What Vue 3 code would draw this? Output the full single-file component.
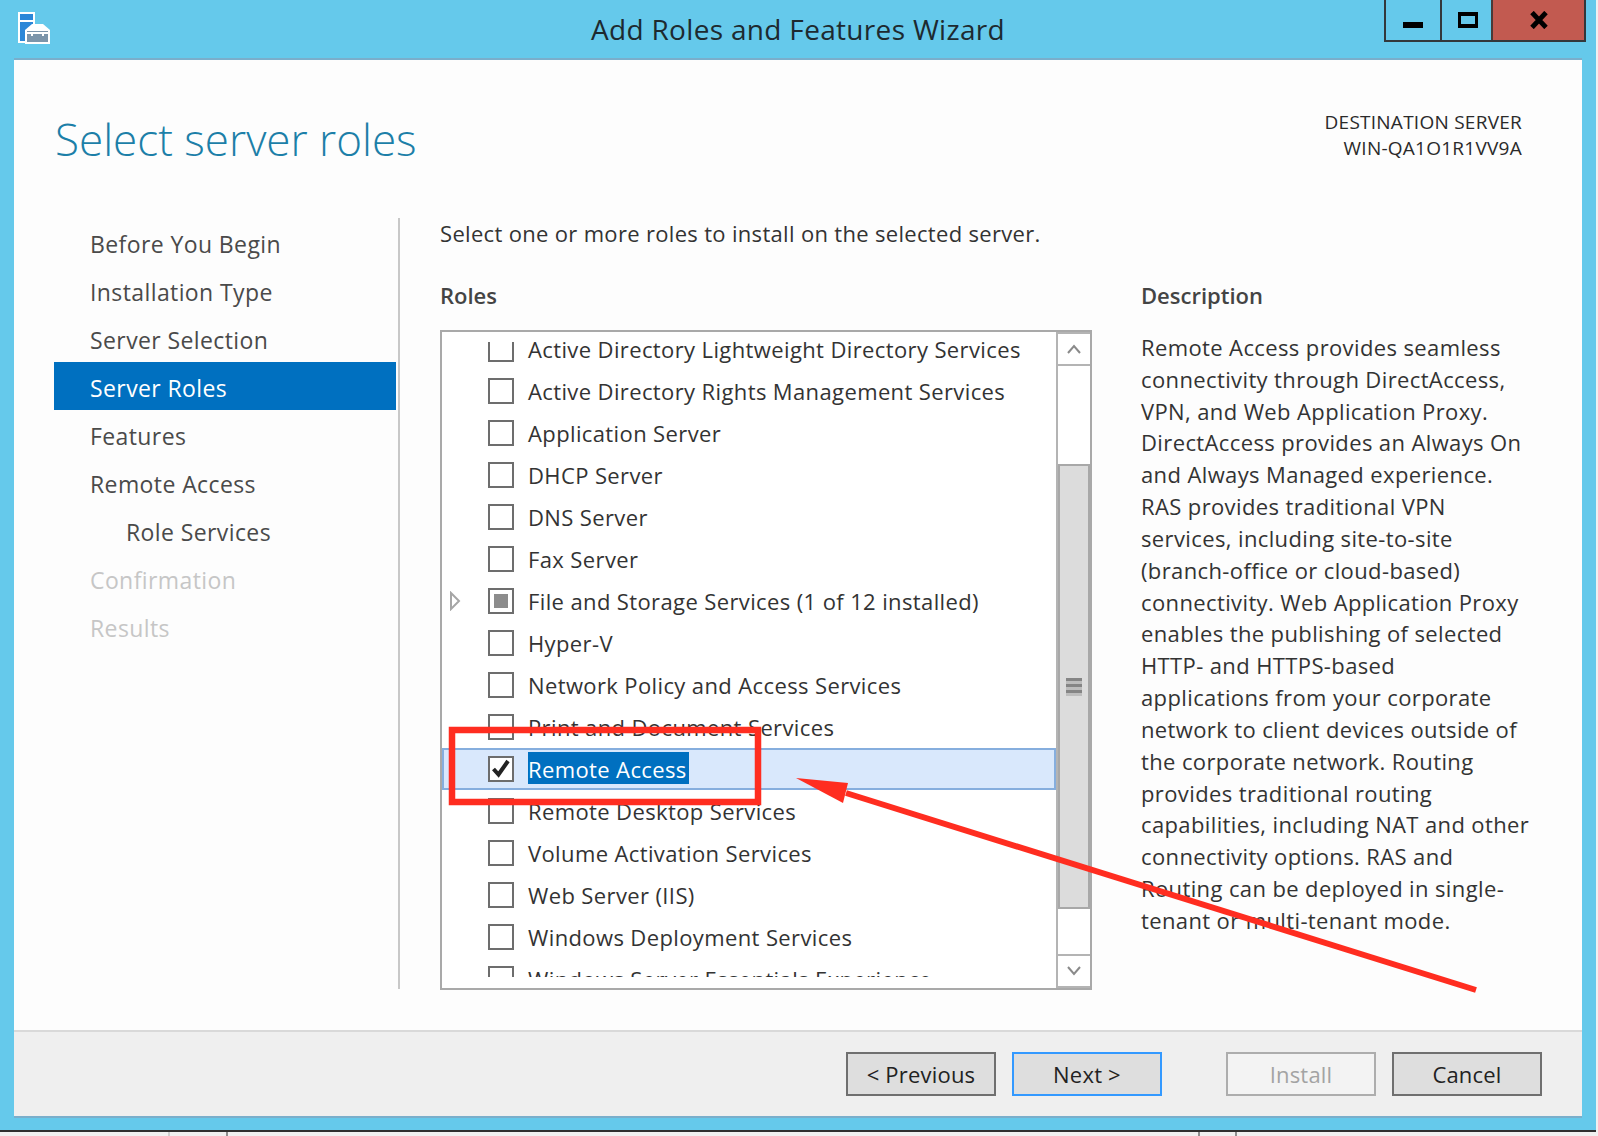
<script setup>
const steps = [
  { label: 'Before You Begin' },
  { label: 'Installation Type' },
  { label: 'Server Selection' },
  { label: 'Server Roles', active: true },
  { label: 'Features' },
  { label: 'Remote Access' },
  { label: 'Role Services', sub: true },
  { label: 'Confirmation', off: true },
  { label: 'Results', off: true },
]
const roles = [
  { label: 'Active Directory Lightweight Directory Services' },
  { label: 'Active Directory Rights Management Services' },
  { label: 'Application Server' },
  { label: 'DHCP Server' },
  { label: 'DNS Server' },
  { label: 'Fax Server' },
  { label: 'File and Storage Services (1 of 12 installed)', partial: true },
  { label: 'Hyper-V' },
  { label: 'Network Policy and Access Services' },
  { label: 'Print and Document Services' },
  { label: 'Remote Access', checked: true },
  { label: 'Remote Desktop Services' },
  { label: 'Volume Activation Services' },
  { label: 'Web Server (IIS)' },
  { label: 'Windows Deployment Services' },
  { label: 'Windows Server Essentials Experience' },
]
const description = [
  'Remote Access provides seamless',
  'connectivity through DirectAccess,',
  'VPN, and Web Application Proxy.',
  'DirectAccess provides an Always On',
  'and Always Managed experience.',
  'RAS provides traditional VPN',
  'services, including site-to-site',
  '(branch-office or cloud-based)',
  'connectivity. Web Application Proxy',
  'enables the publishing of selected',
  'HTTP- and HTTPS-based',
  'applications from your corporate',
  'network to client devices outside of',
  'the corporate network. Routing',
  'provides traditional routing',
  'capabilities, including NAT and other',
  'connectivity options. RAS and',
  'Routing can be deployed in single-',
  'tenant or multi-tenant mode.',
]
</script>

<template>
  <div class="screen">
    <div class="window">
      <header class="titlebar">
        <div class="tb-left">
          <svg class="app-icon" width="34" height="34" viewBox="0 0 34 34">
            <rect x="1" y="1" width="17" height="31" fill="#fff" />
            <rect x="3" y="3" width="13" height="6" fill="#2b87d8" />
            <rect x="3" y="11" width="13" height="19" fill="#2b87d8" />
            <path d="M8 32 V19 L15 13 H26 L33 19 V33 H8 Z" fill="#fff" />
            <rect x="10" y="20" width="21" height="11" fill="#7c95aa" />
            <path d="M16 19 V16 H25 V19" fill="none" stroke="#fff" stroke-width="1.5" />
            <rect x="10" y="21" width="21" height="2" fill="#fff" />
            <rect x="14" y="21" width="2" height="4" fill="#fff" />
            <rect x="25" y="21" width="2" height="4" fill="#fff" />
          </svg>
        </div>
        <div class="tb-title">Add Roles and Features Wizard</div>
        <div class="tb-right">
          <div class="controls">
            <div class="ctl ctl-min"><span class="min-bar"></span></div>
            <div class="ctl ctl-max"><span class="max-box"></span></div>
            <div class="ctl ctl-close">
              <svg width="20" height="18" viewBox="0 0 20 18">
                <path d="M3 1.5 L17 16.5 M17 1.5 L3 16.5" stroke="#000" stroke-width="4.8" fill="none" />
              </svg>
            </div>
          </div>
        </div>
      </header>

      <div class="client">
        <div class="head">
          <h1 class="page-title">Select server roles</h1>
          <div class="dest">
            <div>DESTINATION SERVER</div>
            <div>WIN-QA1O1R1VV9A</div>
          </div>
        </div>

        <div class="body">
          <nav class="steps">
            <div
              v-for="s in steps"
              :key="s.label"
              class="step"
              :class="{ active: s.active, sub: s.sub, off: s.off }"
            >{{ s.label }}</div>
          </nav>

          <main class="pane">
            <div class="intro">Select one or more roles to install on the selected server.</div>
            <div class="cols">
              <section class="roles-col">
                <div class="col-head">Roles</div>
                <div class="listbox">
                  <div class="viewport">
                    <div class="rows">
                      <div
                        v-for="r in roles"
                        :key="r.label"
                        class="row"
                        :class="{ selected: r.checked }"
                      >
                        <div class="expander">
                          <svg v-if="r.partial" width="12" height="20" viewBox="0 0 12 20">
                            <path d="M2 2 L10 10 L2 18 Z" fill="#fff" stroke="#a6a6a6" stroke-width="2" />
                          </svg>
                        </div>
                        <span class="cb" :class="{ partial: r.partial }">
                          <svg v-if="r.checked" class="tick" width="22" height="22" viewBox="0 0 22 22">
                            <path d="M3.5 11 L8.5 16.5 L18 3" fill="none" stroke="#222" stroke-width="4" />
                          </svg>
                        </span>
                        <span class="role-label">{{ r.label }}</span>
                      </div>
                    </div>
                  </div>
                  <div class="scrollbar">
                    <div class="sb-btn">
                      <svg width="16" height="12" viewBox="0 0 16 12"><path d="M2 10 L8 3 L14 10" fill="none" stroke="#8a8a8a" stroke-width="2" /></svg>
                    </div>
                    <div class="sb-track sb-track-top"></div>
                    <div class="sb-thumb"><span class="grip"></span></div>
                    <div class="sb-track sb-track-bottom"></div>
                    <div class="sb-btn sb-btn-down">
                      <svg width="16" height="12" viewBox="0 0 16 12"><path d="M2 2 L8 9 L14 2" fill="none" stroke="#8a8a8a" stroke-width="2" /></svg>
                    </div>
                  </div>
                </div>
              </section>
              <section class="desc-col">
                <div class="col-head">Description</div>
                <div class="desc">
                  <div v-for="line in description" :key="line" class="desc-line">{{ line }}</div>
                </div>
              </section>
            </div>
          </main>
        </div>

        <footer class="foot">
          <button class="btn">&lt; Previous</button>
          <button class="btn">Next &gt;</button>
          <button class="btn btn-disabled">Install</button>
          <button class="btn">Cancel</button>
        </footer>
      </div>
    </div>

    <div class="desk">
      <span class="tick-a"></span>
      <span class="tick-b"></span>
      <span class="tick-c"></span>
      <span class="tick-d"></span>
    </div>

    <svg class="markup" width="1598" height="1136" viewBox="0 0 1598 1136">
      <rect x="452" y="730" width="306" height="72" fill="none" stroke="#ff2d20" stroke-width="6.5" />
      <path d="M846 793 L1476 990" stroke="#ff2d20" stroke-width="6" fill="none" />
      <polygon points="796,778 848,783 843,803" fill="#ff2d20" />
    </svg>
  </div>
</template>

<style>
html, body { margin: 0; padding: 0; background: #f0f0f0; }
</style>

<style scoped>
.screen {
  position: relative;
  width: 1598px;
  height: 1136px;
  overflow: hidden;
  font-family: "Open Sans", "Noto Sans", sans-serif;
  color: #333;
  background: #f0f0f0;
  display: flex;
  flex-direction: column;
}
.window {
  width: 1596px;
  height: 1132px;
  box-sizing: border-box;
  background: #65c9eb;
  border-bottom: 2px solid #2f2f2f;
  display: flex;
  flex-direction: column;
  flex: none;
}
.titlebar {
  height: 58px;
  display: grid;
  grid-template-columns: 1fr auto 1fr;
  flex: none;
}
.tb-left { padding: 11px 0 0 17px; }
.app-icon { display: block; }
.tb-title {
  font-size: 28px;
  letter-spacing: 0.32px;
  line-height: 58px;
  color: #1d2a30;
  white-space: nowrap;
}
.tb-right { display: flex; justify-content: flex-end; padding-right: 10px; }
.controls {
  display: flex;
  height: 42px;
  box-sizing: border-box;
  border: solid #33383b;
  border-width: 0 2px 2px 2px;
}
.ctl { display: flex; justify-content: center; box-sizing: border-box; }
.ctl-min { width: 56px; border-right: 2px solid #33383b; padding-top: 22px; }
.ctl-max { width: 51px; border-right: 2px solid #4a3a38; padding: 12px 0 0 3px; }
.ctl-close { width: 91px; background: #c25a50; padding-top: 11px; }
.min-bar { width: 20px; height: 6px; background: #000; }
.max-box { width: 20px; height: 16px; box-sizing: border-box; border: solid #000; border-width: 4px 3px; }

.client {
  flex: 1;
  margin: 0 14px 12px;
  background: #fdfdfd;
  border-top: 2px solid #7aaecb;
  border-bottom: 2px solid #7aaecb;
  display: flex;
  flex-direction: column;
  min-height: 0;
}
.head {
  height: 158px;
  flex: none;
  display: flex;
  justify-content: space-between;
  box-sizing: border-box;
  padding: 49px 60px 0 41px;
}
.page-title {
  margin: 0;
  font-size: 44px;
  font-weight: 300;
  line-height: 60px;
  color: #1c7fa8;
}
.dest {
  text-align: right;
  font-size: 19px;
  letter-spacing: 0.25px;
  line-height: 26px;
  color: #2a2a2a;
}
.body {
  height: 812px;
  flex: none;
  display: flex;
  padding-left: 40px;
}
.steps {
  width: 344px;
  height: 771px;
  flex: none;
}
.step {
  height: 48px;
  width: 342px;
  box-sizing: border-box;
  padding: 2px 0 0 36px;
  font-size: 23px;
  letter-spacing: 0.4px;
  line-height: 48px;
  color: #4a4a4a;
  white-space: nowrap;
}
.step.sub { padding-left: 72px; }
.step.active { background: #0070c0; color: #fff; }
.step.off { color: #c6c6c6; }
.pane {
  height: 771px;
  flex: none;
  border-left: 2px solid #c8c8c8;
  padding-left: 40px;
  width: 1140px;
  box-sizing: border-box;
}
.intro {
  height: 32px;
  margin-top: -1px;
  margin-bottom: 1px;
  font-size: 22px;
  letter-spacing: 0.32px;
  line-height: 32px;
  color: #333;
  white-space: nowrap;
}
.cols { display: flex; }
.roles-col { width: 652px; flex: none; }
.desc-col { margin-left: 49px; }
.col-head {
  height: 80px;
  box-sizing: border-box;
  padding-top: 29px;
  font-size: 22px;
  line-height: 32px;
  font-weight: 600;
  color: #444;
}
.listbox {
  height: 660px;
  box-sizing: border-box;
  border: 2px solid #a9a9a9;
  display: flex;
  background: #fff;
}
.viewport {
  flex: 1;
  margin: 10px 0 11px;
  overflow: hidden;
}
.rows { margin-top: -14px; }
.row {
  height: 42px;
  box-sizing: border-box;
  border: 2px solid transparent;
  border-bottom-width: 1px;
  display: flex;
  align-items: flex-start;
}
.row.selected {
  background: #d9e8fc;
  border-color: #86aede;
  border-bottom-width: 2px;
}
.expander {
  width: 44px;
  flex: none;
  padding: 9px 0 0 5px;
  box-sizing: border-box;
}
.expander svg { display: block; }
.cb {
  width: 26px;
  height: 26px;
  flex: none;
  margin-top: 6px;
  box-sizing: border-box;
  border: 2px solid #6d6d6d;
  background: #fff;
  display: flex;
  align-items: center;
  justify-content: center;
}
.cb.partial::after {
  content: "";
  width: 14px;
  height: 14px;
  background: #8c8c8c;
}
.tick { display: block; }
.role-label {
  margin: 2px 0 0 14px;
  padding: 0 2px 0 0;
  height: 32px;
  font-size: 22px;
  letter-spacing: 0.38px;
  line-height: 34px;
  color: #333;
  white-space: nowrap;
}
.row.selected .role-label { background: #0070c0; color: #fff; }
.scrollbar {
  width: 34px;
  flex: none;
  box-sizing: border-box;
  border: solid #b4b4b4;
  border-width: 2px 0 2px 2px;
  display: flex;
  flex-direction: column;
  background: #fff;
}
.sb-btn {
  height: 30px;
  flex: none;
  display: flex;
  align-items: center;
  justify-content: center;
  border-bottom: 2px solid #b4b4b4;
}
.sb-btn-down { border-bottom: 0; border-top: 2px solid #b4b4b4; }
.sb-track-top { height: 98px; flex: none; }
.sb-thumb {
  height: 445px;
  flex: none;
  box-sizing: border-box;
  border: 2px solid #a8a8a8;
  background: #dcdcdc;
  display: flex;
  align-items: center;
  justify-content: center;
}
.sb-track-bottom { flex: 1; }
.grip {
  width: 16px;
  height: 18px;
  background: repeating-linear-gradient(180deg, #858585 0 3px, #bdbdbd 3px 6px);
}
.desc {
  margin-top: 2px;
  font-size: 22px;
  letter-spacing: 0.38px;
  line-height: 31.83px;
  color: #333;
}
.desc-line { white-space: nowrap; }
.foot {
  flex: 1;
  background: #efefef;
  border-top: 2px solid #d9d9d9;
  display: flex;
  justify-content: flex-end;
  align-items: flex-start;
  gap: 16px;
  padding: 20px 40px 0 0;
  box-sizing: border-box;
}
.btn {
  width: 150px;
  height: 44px;
  padding: 0;
  box-sizing: border-box;
  border: 2px solid #6f6f6f;
  background: #dedede;
  font-family: inherit;
  font-size: 22px;
  letter-spacing: 0.2px;
  color: #222;
}
.btn:nth-child(2) { border-color: #3399ff; }
.btn-disabled { margin-left: 48px; border-color: #adadad; background: #f3f3f3; color: #a3a3a3; }
.desk {
  flex: 1;
  position: relative;
  background: #f0f0f0;
}
.desk span { position: absolute; top: 0; width: 2px; bottom: 0; background: #8f8f8f; }
.desk .tick-a { left: 168px; background: #cfcfcf; }
.tick-b { left: 226px; }
.tick-c { left: 1198px; }
.tick-d { left: 1235px; }
.markup { position: absolute; left: 0; top: 0; pointer-events: none; }
</style>
